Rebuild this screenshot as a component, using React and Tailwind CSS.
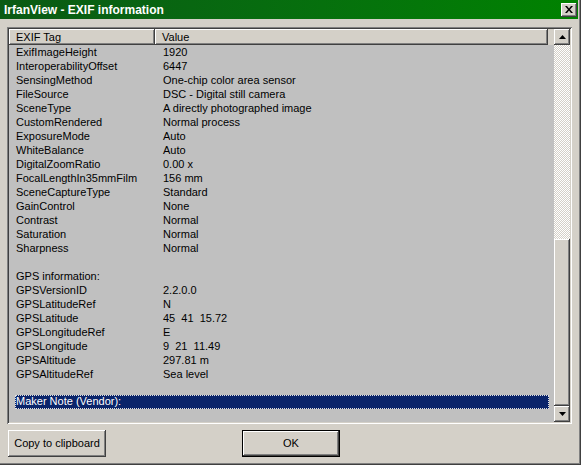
export default function App() {
  const rows = [
    ["ExifImageHeight", "1920"],
    ["InteroperabilityOffset", "6447"],
    ["SensingMethod", "One-chip color area sensor"],
    ["FileSource", "DSC - Digital still camera"],
    ["SceneType", "A directly photographed image"],
    ["CustomRendered", "Normal process"],
    ["ExposureMode", "Auto"],
    ["WhiteBalance", "Auto"],
    ["DigitalZoomRatio", "0.00 x"],
    ["FocalLengthIn35mmFilm", "156 mm"],
    ["SceneCaptureType", "Standard"],
    ["GainControl", "None"],
    ["Contrast", "Normal"],
    ["Saturation", "Normal"],
    ["Sharpness", "Normal"],
    ["", ""],
    ["GPS information:", ""],
    ["GPSVersionID", "2.2.0.0"],
    ["GPSLatitudeRef", "N"],
    ["GPSLatitude", "45  41  15.72"],
    ["GPSLongitudeRef", "E"],
    ["GPSLongitude", "9  21  11.49"],
    ["GPSAltitude", "297.81 m"],
    ["GPSAltitudeRef", "Sea level"],
    ["", ""],
  ];

  const raised =
    "bg-[#d4d0c8] shadow-[inset_-1px_-1px_#404040,inset_1px_1px_#ffffff,inset_-2px_-2px_#808080,inset_2px_2px_#d4d0c8]";

  return (
    <div className="w-[581px] h-[465px] bg-[#d4d0c8] flex flex-col pr-[3px] pb-[3px] shadow-[inset_-1px_-1px_#404040,inset_-2px_-2px_#808080] font-['Liberation_Sans',Arial,sans-serif] text-[11px] text-black overflow-hidden">
      {/* title bar */}
      <div className="h-[19px] flex items-center justify-between pl-[4px] pr-[1px] bg-gradient-to-r from-[#0a5a14] to-[#008200]">
        <span className="text-white font-bold text-[12px] leading-none">IrfanView - EXIF information</span>
        <div className={`w-[16px] h-[14px] flex items-center justify-center ${raised}`}>
          <svg width="8" height="7" viewBox="0 0 8 7">
            <path d="M0 0h2l2 2.5L6 0h2L5 3.5 8 7H6L4 4.5 2 7H0l3-3.5z" fill="#000" />
          </svg>
        </div>
      </div>

      <div className="flex-1 flex flex-col pl-[7px] pr-[6px] pt-[8px]">
        {/* list view */}
        <div className="h-[397px] p-[2px] bg-[#c0c0c0] shadow-[inset_1px_1px_#808080,inset_-1px_-1px_#ffffff,inset_2px_2px_#404040,inset_-2px_-2px_#d4d0c8] flex">
          <div className="flex-1 flex flex-col overflow-hidden">
            <div className="h-[16px] flex bg-[#d4d0c8] leading-[16px]">
              <div className={`w-[146px] pl-[7px] ${raised}`}>EXIF Tag</div>
              <div className={`w-[393px] pl-[7px] ${raised}`}>Value</div>
              <div className="flex-1 bg-[#d4d0c8]" />
            </div>
            {rows.map((r, i) => (
              <div key={i} className="h-[14px] flex leading-[14px] whitespace-pre">
                <div className="w-[146px] pl-[7px]">{r[0]}</div>
                <div className="pl-[8px]">{r[1]}</div>
              </div>
            ))}
            <div className="h-[14px] pl-[6px] pr-[5px] flex">
              <div className="flex-1 bg-[#0a246a] text-white leading-[13px] pl-[1px] outline-1 outline-dotted outline-offset-[-1px] outline-[#e0e0e0]">
                Maker Note (Vendor):
              </div>
            </div>
          </div>

          {/* scrollbar */}
          <div className="w-[16px] flex flex-col">
            <div className={`h-[16px] flex items-center justify-center ${raised}`}>
              <svg width="7" height="4" viewBox="0 0 7 4">
                <path d="M3.5 0L7 4H0z" fill="#000" />
              </svg>
            </div>
            <div className="h-[194px] bg-[repeating-conic-gradient(#ffffff_0_25%,#d4d0c8_0_50%)] bg-[length:2px_2px]" />
            <div className={`flex-1 ${raised}`} />
            <div className={`h-[16px] flex items-center justify-center ${raised}`}>
              <svg width="7" height="4" viewBox="0 0 7 4">
                <path d="M0 0h7L3.5 4z" fill="#000" />
              </svg>
            </div>
          </div>
        </div>

        {/* buttons */}
        <div className="mt-[6px] flex">
          <button className={`ml-[1px] w-[98px] h-[27px] ${raised}`}>Copy to clipboard</button>
          <button className="ml-[136px] w-[98px] h-[27px] border border-black">
            <div className={`w-full h-full flex items-center justify-center ${raised}`}>OK</div>
          </button>
        </div>
      </div>
    </div>
  );
}
